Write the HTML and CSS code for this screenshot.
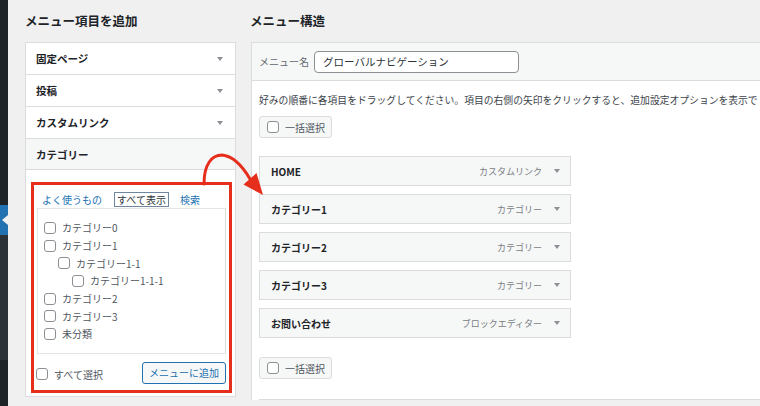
FILE: index.html
```html
<!DOCTYPE html>
<html lang="ja">
<head>
<meta charset="utf-8">
<title>メニュー</title>
<link rel="stylesheet" href="styles.css">
</head>
<body>
<div class="admin">
  <nav class="sidebar">
    <div class="sb-top"></div>
    <div class="sb-current"></div>
    <div class="sb-sub"></div>
    <div class="sb-rest"></div>
  </nav>
  <main class="content">
    <section class="col-left">
      <h2 class="title">メニュー項目を追加</h2>
      <div class="accordion">
        <div class="acc-row"><span>固定ページ</span><span class="caret"></span></div>
        <div class="acc-row"><span>投稿</span><span class="caret"></span></div>
        <div class="acc-row"><span>カスタムリンク</span><span class="caret"></span></div>
        <div class="acc-row open"><span>カテゴリー</span></div>
        <div class="acc-panel">
          <div class="highlight">
            <div class="tabs">
              <span class="tab-link">よく使うもの</span>
              <span class="tab-active">すべて表示</span>
              <span class="tab-link">検索</span>
            </div>
            <div class="tab-panel">
              <ul class="cat-list">
                <li class="lv0"><span class="cb"></span>カテゴリー0</li>
                <li class="lv0"><span class="cb"></span>カテゴリー1</li>
                <li class="lv1"><span class="cb"></span>カテゴリー1-1</li>
                <li class="lv2"><span class="cb"></span>カテゴリー1-1-1</li>
                <li class="lv0"><span class="cb"></span>カテゴリー2</li>
                <li class="lv0"><span class="cb"></span>カテゴリー3</li>
                <li class="lv0"><span class="cb"></span>未分類</li>
              </ul>
            </div>
            <div class="panel-foot">
              <label class="select-all"><span class="cb"></span>すべて選択</label>
              <span class="btn-add">メニューに追加</span>
            </div>
          </div>
        </div>
      </div>
    </section>
    <section class="col-right">
      <h2 class="title">メニュー構造</h2>
      <div class="menu-box">
        <div class="menu-head">
          <span class="name-label">メニュー名</span>
          <span class="name-input">グローバルナビゲーション</span>
        </div>
        <div class="menu-body">
          <p class="desc">好みの順番に各項目をドラッグしてください。項目の右側の矢印をクリックすると、追加設定オプションを表示で</p>
          <div class="bulk"><span class="cb"></span>一括選択</div>
          <ul class="menu-items">
            <li class="item"><span class="item-title">HOME</span><span class="item-type">カスタムリンク</span><span class="caret"></span></li>
            <li class="item"><span class="item-title">カテゴリー1</span><span class="item-type">カテゴリー</span><span class="caret"></span></li>
            <li class="item"><span class="item-title">カテゴリー2</span><span class="item-type">カテゴリー</span><span class="caret"></span></li>
            <li class="item"><span class="item-title">カテゴリー3</span><span class="item-type">カテゴリー</span><span class="caret"></span></li>
            <li class="item"><span class="item-title">お問い合わせ</span><span class="item-type">ブロックエディター</span><span class="caret"></span></li>
          </ul>
          <div class="bulk bulk-bottom"><span class="cb"></span>一括選択</div>
          <div class="menu-foot"></div>
        </div>
      </div>
    </section>
  </main>
  <svg class="annot" width="760" height="406" viewBox="0 0 760 406">
    <path d="M204 184 C204 164 212 155 222 155 C233 156 243 167 250 179" fill="none" stroke="#e62e1c" stroke-width="3" stroke-linecap="round"/>
    <polygon points="263,195 243.5,184.5 256.5,173" fill="#e62e1c"/>
  </svg>
</div>
</body>
</html>
```

FILE: styles.css
```css
html, body {
  margin: 0;
  padding: 0;
}
body {
  width: 760px;
  height: 406px;
  overflow: hidden;
  background: #f0f0f1;
  font-family: "Noto Sans CJK JP", "Noto Sans", sans-serif;
  font-size: 10px;
  color: #3c434a;
}
.admin {
  position: relative;
  display: flex;
  height: 406px;
}
.sidebar {
  width: 8px;
  flex: none;
  display: flex;
  flex-direction: column;
}
.sb-top { height: 205px; background: #1d2327; }
.sb-current { height: 30px; background: #2271b1; position: relative; }
.sb-current::after {
  content: "";
  position: absolute;
  right: 0;
  top: 10px;
  border-top: 5px solid transparent;
  border-bottom: 5px solid transparent;
  border-right: 6px solid #f0f0f1;
}
.sb-sub { height: 125px; background: #2c3338; }
.sb-rest { flex: 1; background: #1d2327; }

.content {
  display: flex;
  padding-left: 17px;
  flex: 1;
  min-width: 0;
}
.title {
  margin: 0;
  height: 42px;
  line-height: 42px;
  font-size: 12.5px;
  font-weight: bold;
  color: #1d2327;
}
.col-left {
  width: 211px;
  flex: none;
}
.accordion {
  border: 1px solid #dcdcde;
  background: #fff;
}
.acc-row {
  height: 31px;
  border-bottom: 1px solid #dcdcde;
  display: flex;
  align-items: center;
  justify-content: space-between;
  padding: 0 12px 0 10px;
  font-size: 10.5px;
  font-weight: bold;
  color: #1d2327;
}
.acc-row.open {
  height: 30px;
  background: #f6f7f7;
}
.caret {
  width: 0;
  height: 0;
  border-left: 3.5px solid transparent;
  border-right: 3.5px solid transparent;
  border-top: 4px solid #8c8f94;
}
.acc-panel {
  padding: 12px 3px 3px 5px;
}
.highlight {
  border: 3px solid #e62e1c;
}
.tabs {
  display: flex;
  align-items: center;
  padding: 7px 0 0 8px;
  height: 15px;
}
.tab-link {
  color: #2271b1;
}
.tab-active {
  margin: 0 11px 0 12px;
  border: 1px solid #6f86a0;
  padding: 0 2px;
  height: 13px;
  line-height: 13px;
  color: #2c3338;
}
.tab-panel {
  margin: 1px 3px 0 3px;
  border: 1px solid #e4e4e6;
  border-right-color: #dcdcde;
}
.cat-list {
  list-style: none;
  margin: 0;
  padding: 10px 0 10px 6px;
}
.cat-list li {
  height: 17.7px;
  display: flex;
  align-items: center;
  color: #50575e;
}
.cat-list li.lv1 { padding-left: 14px; }
.cat-list li.lv2 { padding-left: 28px; }
.cb {
  width: 10px;
  height: 10px;
  flex: none;
  border: 1px solid #8c8f94;
  border-radius: 3px;
  background: #fff;
  margin-right: 6px;
}
.panel-foot {
  display: flex;
  justify-content: space-between;
  align-items: center;
  padding: 8px 3px 6px 2px;
}
.select-all {
  display: flex;
  align-items: center;
  color: #50575e;
  padding-top: 3px;
}
.select-all .cb { margin-right: 6px; }
.btn-add {
  width: 82px;
  height: 20px;
  border: 1px solid #2271b1;
  border-radius: 3px;
  background: #f6f7f7;
  color: #2271b1;
  display: flex;
  align-items: center;
  justify-content: center;
}

.col-right {
  margin-left: 14px;
  flex: 1;
  min-width: 0;
}
.menu-box {
  margin-left: 1px;
  border-top: 1px solid #dcdcde;
  border-left: 1px solid #dcdcde;
  background: #fff;
}
.menu-head {
  height: 37px;
  background: #f6f7f7;
  border-bottom: 1px solid #dcdcde;
  display: flex;
  align-items: center;
  padding-left: 7px;
}
.name-label {
  color: #646970;
  margin-right: 5px;
}
.name-input {
  width: 195px;
  height: 20px;
  line-height: 20px;
  border: 1px solid #8c8f94;
  border-radius: 4px;
  background: #fff;
  padding-left: 8px;
  font-size: 10.5px;
  color: #2c3338;
}
.menu-body {
  padding: 12px 0 0 7px;
}
.desc {
  margin: 0;
  line-height: 14px;
  white-space: nowrap;
  font-size: 9.8px;
  color: #3c434a;
}
.bulk {
  margin-top: 9px;
  height: 20px;
  border: 1px solid #dcdcde;
  border-radius: 3px;
  background: #f6f7f7;
  display: flex;
  align-items: center;
  padding-left: 7px;
  width: 64px;
  color: #50575e;
}
.bulk .cb { margin-right: 6px; }
.bulk-bottom { margin-top: 19px; }
.menu-items {
  list-style: none;
  margin: 18px 0 0 0;
  padding: 0;
  width: 312px;
  display: flex;
  flex-direction: column;
  gap: 8px;
}
.item {
  height: 28px;
  border: 1px solid #dcdcde;
  background: #f6f7f7;
  display: flex;
  align-items: center;
  padding: 0 10px 0 11px;
}
.item-title {
  flex: 1;
  font-weight: bold;
  color: #1d2327;
}
.item-type {
  font-size: 9px;
  color: #787c82;
  margin-right: 12px;
}
.menu-foot {
  margin-top: 20px;
  border-top: 1px solid #dcdcde;
}
.annot {
  position: absolute;
  left: 0;
  top: 0;
  pointer-events: none;
}
```
